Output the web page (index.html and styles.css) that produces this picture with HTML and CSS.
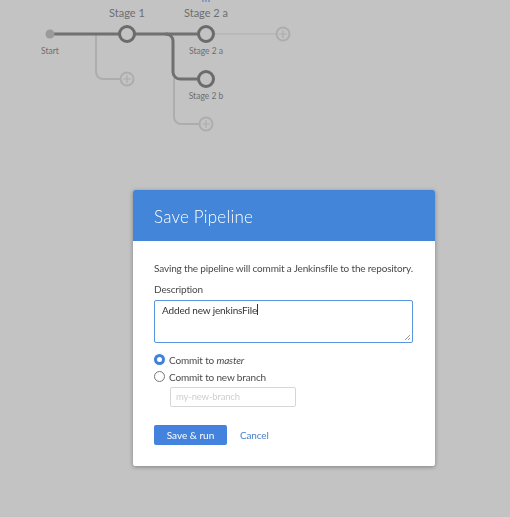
FILE: index.html
```html
<!DOCTYPE html>
<html>
<head>
<meta charset="utf-8">
<link rel="stylesheet" href="styles.css">
</head>
<body>
<div class="canvas">
  <svg class="graph" width="320" height="140" viewBox="0 0 320 140">
    <g fill="none" stroke-linecap="round">
      <path class="ghost" d="M96 34 V72 a7 7 0 0 0 7 7 H120"/>
      <path class="ghost" d="M174 79 V117 a7 7 0 0 0 7 7 H199"/>
      <path class="ghost dotted" d="M213 34 H277"/>
      <circle class="ghost" cx="283" cy="34" r="6.5"/>
      <path class="ghost thin" d="M283 30.5 V37.5 M279.5 34 H286.5"/>
      <circle class="ghost" cx="127" cy="79" r="6.5"/>
      <path class="ghost thin" d="M127 75.5 V82.5 M123.5 79 H130.5"/>
      <circle class="ghost" cx="206" cy="124" r="6.5"/>
      <path class="ghost thin" d="M206 120.5 V127.5 M202.5 124 H209.5"/>
      <path class="line" d="M52 34 H119"/>
      <path class="line" d="M135 34 H198"/>
      <path class="line" d="M166 34 a7 7 0 0 1 7 7 V72 a7 7 0 0 0 7 7 H198"/>
      <circle class="node" cx="127" cy="34" r="7.5"/>
      <circle class="node" cx="206" cy="34" r="7.5"/>
      <circle class="node" cx="206" cy="79" r="7.5"/>
    </g>
    <circle class="start" cx="50" cy="34" r="4.5"/>
    <path class="topicon" d="M203 0 V2 M206 0 V2 M209 0 V2"/>
    <text class="lbl big" x="127" y="17">Stage 1</text>
    <text class="lbl big" x="206" y="17">Stage 2 a</text>
    <text class="lbl small" x="50" y="54">Start</text>
    <text class="lbl small" x="206" y="54">Stage 2 a</text>
    <text class="lbl small" x="206" y="99">Stage 2 b</text>
  </svg>
</div>

<div class="modal">
  <div class="dialog">
    <div class="dialog-header">Save Pipeline</div>
    <div class="dialog-body">
      <p class="intro">Saving the pipeline will commit a Jenkinsfile to the repository.</p>
      <label class="field-label">Description</label>
      <div class="textarea">Added new jenkinsFile<span class="caret"></span>
        <svg class="grip" width="7" height="7" viewBox="0 0 7 7"><path d="M6 1 L1 6 M6 4 L4 6" stroke="#999" stroke-width="1" fill="none"/></svg>
      </div>
      <div class="radio-row first">
        <span class="radio checked"></span>
        <span>Commit to <em>master</em></span>
      </div>
      <div class="radio-row">
        <span class="radio"></span>
        <span>Commit to new branch</span>
      </div>
      <div class="branch-input">my-new-branch</div>
      <div class="actions">
        <button class="btn-primary">Save &amp; run</button>
        <span class="link">Cancel</span>
      </div>
    </div>
  </div>
</div>
</body>
</html>
```

FILE: styles.css
```css
html, body {
  margin: 0;
  padding: 0;
  width: 510px;
  height: 517px;
  overflow: hidden;
  background: #c3c3c3;
  font-family: Lato, "Open Sans", sans-serif;
}

.canvas {
  width: 510px;
  height: 517px;
}

.graph {
  display: block;
}

.ghost {
  stroke: #adadad;
  stroke-width: 2;
}
.ghost.thin {
  stroke-width: 1.2;
}
.ghost.dotted {
  stroke-width: 1;
  stroke-dasharray: 1.5 1;
}

.line {
  stroke: #707070;
  stroke-width: 3;
}

.node {
  stroke: #6b6b6b;
  stroke-width: 3;
  fill: #c3c3c3;
}

.start {
  fill: #9a9a9a;
}

.topicon {
  stroke: #6f8fc6;
  stroke-width: 1.5;
}

.lbl {
  fill: #6e6e6e;
  text-anchor: middle;
  font-family: Lato, sans-serif;
}
.lbl.big {
  font-size: 11px;
}
.lbl.small {
  font-size: 8.5px;
}

.modal {
  position: fixed;
  inset: 0;
}

.dialog {
  position: absolute;
  left: 133px;
  top: 190px;
  width: 302px;
  height: 276px;
  background: #fff;
  border-radius: 2px;
  box-shadow: 0 1px 4px rgba(0, 0, 0, 0.35);
  overflow: hidden;
}

.dialog-header {
  height: 51px;
  background: #4285d9;
  color: #fff;
  font-size: 17px;
  font-weight: 300;
  letter-spacing: 0.2px;
  padding-left: 21px;
  line-height: 53px;
  box-sizing: border-box;
}

.dialog-body {
  padding: 20px 21px 0 21px;
  font-size: 10px;
  letter-spacing: -0.16px;
  color: #4a4a4a;
}

.intro {
  margin: 0;
  line-height: 14px;
  white-space: nowrap;
}

.field-label {
  display: block;
  margin-top: 7px;
  line-height: 14px;
}

.textarea {
  position: relative;
  margin-top: 4px;
  width: 259px;
  height: 43px;
  box-sizing: border-box;
  border: 1px solid #5a95e0;
  border-radius: 2px;
  padding: 2px 7px;
  line-height: 14px;
  color: #333;
}

.caret {
  display: inline-block;
  width: 1px;
  height: 11px;
  background: #333;
  vertical-align: -1px;
}

.grip {
  position: absolute;
  right: 1px;
  bottom: 1px;
}

.radio-row {
  display: flex;
  align-items: center;
  gap: 4px;
  height: 17px;
  color: #4a4a4a;
}
.radio-row.first {
  margin-top: 8px;
}

.radio {
  width: 11px;
  height: 11px;
  border-radius: 50%;
  border: 1px solid #777;
  background: #fff;
  box-sizing: border-box;
}
.radio.checked {
  border: 3.5px solid #3f82dd;
  background: #fff;
}

.branch-input {
  margin-top: 2px;
  margin-left: 16px;
  width: 126px;
  height: 20px;
  box-sizing: border-box;
  border: 1px solid #d6d6d6;
  border-radius: 2px;
  padding: 0 5px;
  line-height: 18px;
  font-size: 9.5px;
  color: #cfcfcf;
}

.actions {
  display: flex;
  align-items: center;
  gap: 13px;
  margin-top: 18px;
}

.btn-primary {
  width: 73px;
  height: 20px;
  border: none;
  border-radius: 2px;
  background: #4483dd;
  color: #fff;
  font-family: Lato, sans-serif;
  font-size: 10px;
  padding: 0;
}

.link {
  color: #4a7fc9;
  font-size: 10px;
}
```
